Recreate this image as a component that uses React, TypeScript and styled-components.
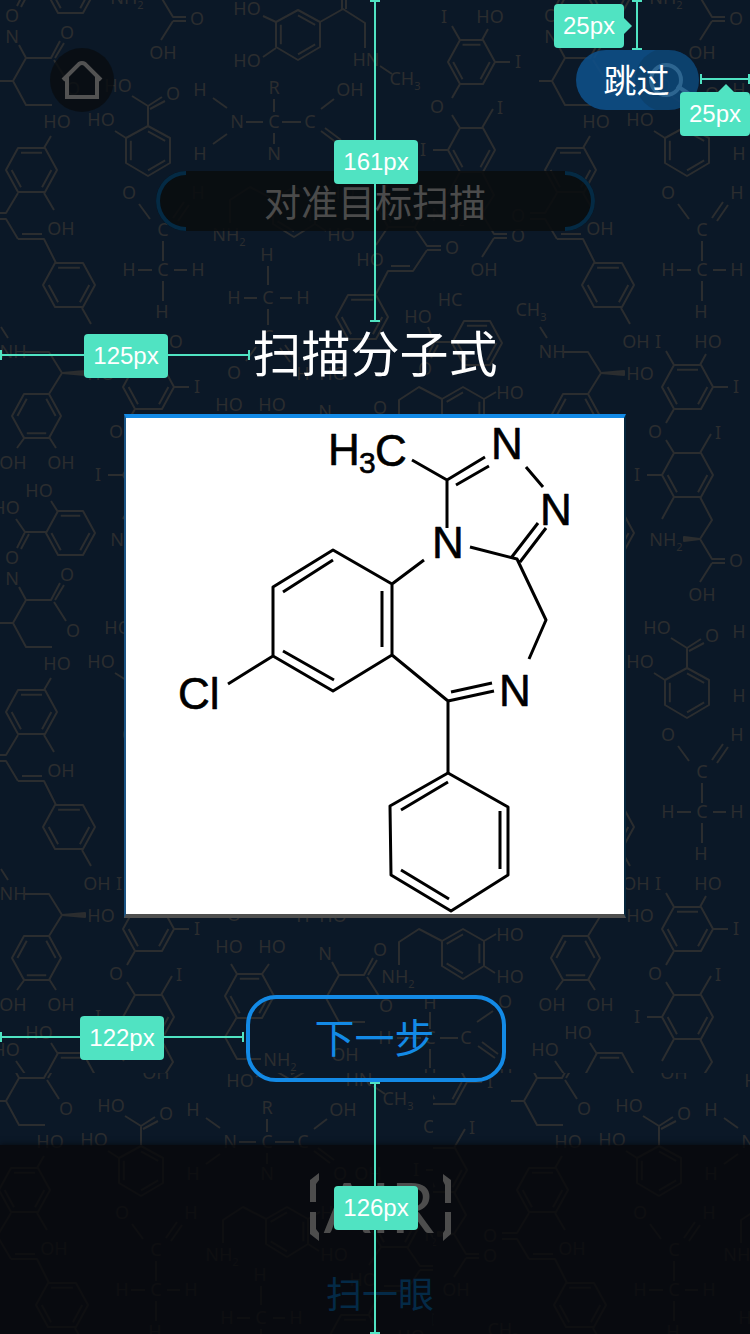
import React from 'react';
import styled, { createGlobalStyle } from 'styled-components';

const Global = createGlobalStyle`
  *, *::before, *::after { box-sizing: border-box; }
  body { margin: 0; background: #0b1827; }
`;

const cjk = `'Noto Sans CJK SC', 'Noto Sans', sans-serif`;

/* ---------- layout ---------- */

const Page = styled.main`
  position: relative;
  display: flex;
  flex-direction: column;
  align-items: center;
  min-height: 100vh;
  overflow: hidden;
  background: #0b1827;
  font-family: ${cjk};
  font-weight: 400;
`;

const Backdrop = styled.svg`
  position: absolute;
  inset: 0;
  width: 100%;
  height: 100%;
`;

const Header = styled.header`
  position: relative;
  align-self: stretch;
  display: flex;
  justify-content: space-between;
  align-items: center;
  padding: 48px 51px 0 50px;
`;

const HomeButton = styled.button`
  width: 64px;
  height: 64px;
  padding: 0;
  border: 0;
  border-radius: 32px;
  background: rgba(9, 12, 16, 0.8);
`;

const SkipButton = styled.button`
  position: relative;
  width: 123px;
  height: 60px;
  padding: 0 2px 2px 0;
  border: 0;
  border-radius: 30px;
  overflow: hidden;
  background: rgba(14, 80, 138, 0.88);
  color: #fff;
  font: 400 33px/58px ${cjk};
`;

const SkipLens = styled.svg`
  position: absolute;
  top: 0;
  right: 0;
`;

const SkipText = styled.span`
  position: relative;
`;

const Hint = styled.p`
  position: relative;
  display: flex;
  justify-content: center;
  width: 439px;
  height: 60px;
  margin: 59px 0 0;
  border-radius: 30px;
  background: rgba(9, 12, 15, 0.88);
  color: #4b4b4b;
  font-size: 37px;
  line-height: 60px;
`;

const HintArc = styled.span<{ $side: 'left' | 'right' }>`
  position: absolute;
  top: 0;
  ${(p) => p.$side}: 0;
  width: 30px;
  height: 60px;
  border: 4px solid #042a44;
  border-${(p) => (p.$side === 'left' ? 'right' : 'left')}: 0;
  border-radius: ${(p) => (p.$side === 'left' ? '30px 0 0 30px' : '0 30px 30px 0')};
`;

const Title = styled.h1`
  position: relative;
  margin: 90px 0 0;
  color: #fff;
  font-size: 49px;
  font-weight: 400;
  line-height: 60px;
`;

const Card = styled.section`
  position: relative;
  width: 502px;
  height: 504px;
  margin-top: 33px;
  border: solid;
  border-width: 4px 2px;
  border-color: #138ae6 #05263c #4f4f4e #1c5585;
  background: #fff;
`;

const Formula = styled.svg`
  display: block;
  width: 100%;
  height: 100%;
  fill: none;
  stroke: #000;
  stroke-width: 3;
  stroke-linejoin: round;

  text {
    fill: #000;
    stroke: #000;
    stroke-width: 0.6px;
    font: 400 44px 'Liberation Sans', Arial, sans-serif;
  }
  .sub { font-size: 30px; }
`;

const NextButton = styled.button`
  position: relative;
  width: 260px;
  height: 87px;
  margin: 77px 0 0 2px;
  padding: 0 3px 6px 0;
  border: 4px solid #138ae6;
  border-radius: 30px;
  background: transparent;
  color: #138ae6;
  font: 400 40px/72px ${cjk};
`;

const Footer = styled.footer`
  position: relative;
  align-self: stretch;
  flex: 1;
  display: flex;
  flex-direction: column;
  align-items: center;
  min-height: 189px;
  margin-top: 63px;
  padding: 26px 0 0 10px;
  background: rgba(7, 8, 10, 0.8);
  box-shadow: 0 0 6px rgba(7, 8, 11, 0.9);
`;

const Logo = styled.svg`
  overflow: visible;
`;

const ScanLabel = styled.span`
  margin-top: 25px;
  color: #042a47;
  font-size: 36px;
  line-height: 48px;
`;

/* ---------- spacing annotations laid over the screen ---------- */

const mint = '#50e3c2';

const Ruler = styled.div<{ $v?: boolean; $x: string; $y: number; $len: string }>`
  position: absolute;
  left: ${(p) => p.$x};
  top: ${(p) => p.$y}px;
  width: ${(p) => (p.$v ? '10px' : p.$len)};
  height: ${(p) => (p.$v ? p.$len : '10px')};
  border: solid ${mint};
  border-width: ${(p) => (p.$v ? '2px 0' : '0 2px')};
  background: linear-gradient(${mint}, ${mint}) center / ${(p) => (p.$v ? '2px 100%' : '100% 2px')} no-repeat;
`;

const Tag = styled.span<{ $x: string; $y: number; $w: number; $tip?: 'right' | 'top' }>`
  position: absolute;
  left: ${(p) => p.$x};
  top: ${(p) => p.$y}px;
  width: ${(p) => p.$w}px;
  height: 44px;
  border-radius: 4px;
  background: ${mint};
  color: #fff;
  font: 400 24px/44px 'Liberation Sans', Arial, sans-serif;
  text-align: center;

  &::after {
    content: '';
    display: ${(p) => (p.$tip ? 'block' : 'none')};
    position: absolute;
    border: 8px solid transparent;
    ${(p) =>
      p.$tip === 'right'
        ? `left: 100%; top: 14px; border-left-color: ${mint};`
        : `bottom: 100%; left: 38px; border-bottom-color: ${mint};`}
  }
`;

/* ---------- molecule wallpaper ---------- */

type P = [number, number];

function Ring({ pts, dbl }: { pts: P[]; dbl: number[] }) {
  const cx = pts.reduce((s, p) => s + p[0], 0) / 6;
  const cy = pts.reduce((s, p) => s + p[1], 0) / 6;
  const inset = ([x, y]: P) => `${cx + (x - cx) * 0.78},${cy + (y - cy) * 0.78}`;
  const inner = dbl.map((i) => `M${inset(pts[i])}L${inset(pts[(i + 1) % 6])}`).join('');
  return <path d={`M${pts.map((p) => p.join(',')).join('L')}Z${inner}`} />;
}

/* flat-topped ring, from its left-most corner */
const flat = (x: number, y: number, w = 50, h = 22): P[] => [
  [x, y], [x + 12, y - h], [x + w - 12, y - h], [x + w, y], [x + w - 12, y + h], [x + 12, y + h],
];
/* ring with a corner at the top */
const tall = (x: number, y: number, w = 22): P[] => [
  [x, y], [x + w, y + 12], [x + w, y + 37], [x, y + 50], [x - w, y + 37], [x - w, y + 12],
];

function Atom({ x, y, children }: { x: number; y: number; children: string }) {
  const m = children.match(/^(.*?)(\d?)$/)!;
  return (
    <text x={x} y={y + 6}>
      {m[1]}
      {m[2] && <tspan dy="5" fontSize="11">{m[2]}</tspan>}
    </text>
  );
}

const atoms: [string, number, number][] = [
  ['O', 12, 558], ['HO', 57, 122], ['HO', 118, 86], ['O', 173, 94], ['HO', 101, 120],
  ['HO', 247, 9], ['HO', 247, 61], ['H', 200, 90], ['R', 274, 88], ['OH', 350, 90],
  ['N', 237, 122], ['C', 274, 122], ['C', 310, 122], ['H', 200, 154], ['N', 274, 154],
  ['O', 347, 154], ['OH', 375, 154], ['HN', 366, 60], ['CH3', 405, 79],
  ['O', 129, 193], ['H', 198, 193], ['C', 163, 230], ['H', 129, 270], ['C', 163, 270],
  ['H', 198, 270], ['H', 162, 312], ['OH', 61, 229], ['H', 267, 255], ['H', 234, 298],
  ['C', 268, 298], ['H', 303, 298], ['C', 268, 337], ['O', 234, 373], ['H', 303, 374],
  ['HO', 333, 374], ['HO', 370, 260], ['O', 452, 248], ['HO', 418, 317], ['HC', 450, 300],
  ['CH3', 531, 310], ['O', 425, 369], ['NH', 13, 352], ['HO', 101, 374], ['OH', 97, 342],
  ['O', 518, 216], ['HO', 229, 405], ['HO', 272, 405], ['NH2', 280, 518], ['OH', 13, 463],
  ['OH', 61, 463], ['HO', 39, 491], ['HO', 6, 508], ['H', 430, 461], ['C', 430, 496],
  ['H', 385, 496], ['C', 466, 496], ['O', 505, 460], ['OH', 345, 513], ['H', 430, 534], ['H', 506, 534],
];

const bonds = [
  // salicylic acid
  'M51 136L44 148M132 96L148 106L162 97M150 109L165 101M148 106V126M115 131L126 138',
  // chalcone chain
  'M44 193L54 210M18 193L6 213H-9M18 239L6 219H-9M18 239H44L56 263M22 234H42M82 308L91 324',
  // amino acid
  'M213 98L227 108M213 144L227 134M246 122H263M282 122H301M274 99V112M274 133V144M321 109L334 99M321 131L337 143M325 128L341 140',
  // adrenaline
  'M263 16L276 22M263 57L276 48M320 22L343 9L365 23V48M342 9V-8M346 9V-8M380 66L392 74',
  // aldehyde
  'M139 204L150 219M173 218L184 202M178 221L189 205M163 241V261M138 270H152M174 270H187M163 281V301',
  'M268 266V285M244 298H257M280 298H292M268 309V325M256 347L246 361M280 348L290 362M285 345L295 359',
  // second chain
  'M376 245L388 227M414 227L427 246H441M427 250H441M427 250L413 271H388L376 294M391 266H410',
  'M428 327L434 342H452M434 343L427 357M438 345L431 358',
  // amine with wedge
  'M1 327L8 338M25 352H49L62 373L49 394M25 437L17 448M49 437L56 448',
  'M231 422L237 432M269 422L262 432M237 475L225 495L237 517H261',
  // benzoic acid
  'M51 501L58 512M46 532H25L16 519M25 532L17 548M29 534L21 549',
  'M430 470V487M397 496H421M440 496H458M477 480L493 469M478 504L495 516M482 500L498 512M430 507V526',
].join('');

function Peptide() {
  return (
    <g>
      <Atom x={12} y={37}>N</Atom>
      <Atom x={67} y={33}>O</Atom>
      <Atom x={73} y={89}>O</Atom>
      <path d="M19 45L26 58H51L60 41M55 58L64 43M54 60L66 79M26 58L13 81H0M13 81L26 105H52" />
    </g>
  );
}

function Dopamine() {
  return (
    <g>
      <Atom x={229} y={235}>NH2</Atom>
      <Atom x={341} y={193}>HO</Atom>
      <Atom x={341} y={235}>HO</Atom>
      <Ring pts={tall(294, 187, 21)} dbl={[1, 3, 5]} />
      <path d="M230 223V200L250 187L273 199M315 199L327 192M315 224L326 231" />
    </g>
  );
}

function Thyroxine({ n = 0 }: { n?: number }) {
  return (
    <g>
      <Atom x={119 + n} y={342}>I</Atom>
      <Atom x={169} y={342}>HO</Atom>
      <Atom x={197} y={387}>I</Atom>
      <Atom x={116} y={432}>O</Atom>
      <Atom x={179} y={433}>I</Atom>
      <Atom x={98 + n} y={475}>I</Atom>
      <Atom x={127} y={540}>NH2</Atom>
      <Atom x={197} y={561}>O</Atom>
      <Atom x={163} y={595}>OH</Atom>
      <Ring pts={flat(123 + n, 387, 51 - n)} dbl={[1, 3, 5]} />
      <Ring pts={flat(123 + n, 475, 51 - n)} dbl={[3, 5]} />
      <path d={`M${127 + n} 351L${135 + n} 365M167 354L161 365M174 387H189M${135 + n} 409L${127 + n} 423M${127 + n} 440L${135 + n} 453M172 434L161 453M${108 + n} 475H${123 + n}M${135 + n} 497L${123 + n} 519M161 497L173 520L161 539L173 559H186M173 563H186M173 563L161 582`} />
      <path d="M161 539L145 537V541Z" fill="#2b2d2f" />
    </g>
  );
}

function Tile() {
  return (
    <g>
      {atoms.map(([t, x, y]) => (
        <Atom key={`${t}${x}-${y}`} x={x} y={y}>{t}</Atom>
      ))}
      <path d={bonds} />
      <path d="M62 373L85 371V375Z" fill="#2b2d2f" />
      <Ring pts={flat(6, 170, 51)} dbl={[1, 3, 5]} />
      <Ring pts={flat(43, 285, 52)} dbl={[1, 3, 5]} />
      <Ring pts={tall(148, 126)} dbl={[0, 2, 4]} />
      <Ring pts={tall(298, 10)} dbl={[0, 2, 4]} />
      <Ring pts={flat(336, 317, 52)} dbl={[1, 3, 5]} />
      <Ring pts={flat(376, 205, 51)} dbl={[1, 3, 5]} />
      <Ring pts={flat(452, 343, 50)} dbl={[1, 3, 5]} />
      <Ring pts={flat(12, 416, 49)} dbl={[0, 2, 4]} />
      <Ring pts={flat(225, 454, 49)} dbl={[1, 3, 5]} />
      <Ring pts={flat(46, 533, 49)} dbl={[1, 3, 5]} />
      <Peptide />
      <g transform="translate(313 375)"><Peptide /></g>
      <Dopamine />
      <g transform="translate(169 200)"><Dopamine /></g>
      <Thyroxine />
      <g transform="translate(321 -325)"><Thyroxine n={4} /></g>
    </g>
  );
}

function Wallpaper() {
  return (
    <Backdrop viewBox="0 0 750 1334" preserveAspectRatio="xMidYMin slice" aria-hidden="true">
      <defs>
        <g id="tile"><Tile /></g>
        <g id="column">
          <use href="#tile" y="-542" />
          <use href="#tile" />
          <use href="#tile" y="542" />
        </g>
        <clipPath id="upper"><rect width="750" height="1073" /></clipPath>
        <clipPath id="lowerLeft"><rect y="1073" width="433" height="261" /></clipPath>
        <clipPath id="lowerRight"><rect x="433" y="1073" width="317" height="261" /></clipPath>
      </defs>
      <g
        fill="none"
        stroke="#2b2d2f"
        strokeWidth="2"
        strokeLinejoin="round"
        fontFamily="'Noto Sans', sans-serif"
        fontSize="18"
        fontWeight="400"
        textAnchor="middle"
      >
        <style>{`#tile text { fill: #2b2d2f; stroke: none; }`}</style>
        <g clipPath="url(#upper)">
          <use href="#column" />
          <use href="#column" x="539" />
        </g>
        <g clipPath="url(#lowerLeft)">
          <use href="#column" x="-7" y="1020" />
        </g>
        <g clipPath="url(#lowerRight)">
          <use href="#column" x="-28" y="1020" />
          <use href="#column" x="511" y="1020" />
        </g>
      </g>
    </Backdrop>
  );
}

/* ---------- screen ---------- */

export default function App() {
  return (
    <Page>
      <Global />
      <Wallpaper />

      <Header>
        <HomeButton aria-label="首页">
          <svg width="64" height="64" viewBox="0 0 64 64" fill="none" stroke="#525252" strokeWidth="4">
            <path d="M13 32L29 16Q32 14 35 16L51 32" strokeWidth="4" />
            <path d="M17 29V49H47V29" />
          </svg>
        </HomeButton>
        <SkipButton>
          <SkipLens width="64" height="60" viewBox="0 0 64 60" fill="none" aria-hidden="true">
            <circle cx="32" cy="30" r="32" fill="#0c1620" fillOpacity="0.16" />
            <circle cx="31" cy="30" r="15" stroke="#2d6590" strokeWidth="4" />
            <path d="M42 36L64 50" stroke="#2d6590" strokeWidth="4" />
          </SkipLens>
          <SkipText>跳过</SkipText>
        </SkipButton>
      </Header>

      <Hint>
        <HintArc $side="left" />
        对准目标扫描
        <HintArc $side="right" />
      </Hint>

      <Title>扫描分子式</Title>

      <Card>
        <Formula viewBox="126 418 498 496" role="img" aria-label="分子式">
          <text x="328" y="465">H</text>
          <text x="359" y="473" className="sub">3</text>
          <text x="375" y="466">C</text>
          <text x="491" y="459">N</text>
          <text x="540" y="525">N</text>
          <text x="432" y="558">N</text>
          <text x="499" y="706">N</text>
          <text x="178" y="709">Cl</text>
          <path d="M412 460L447 480V528M447 480L485 457M456 485L489 466M526 467L543 487M470 547L517 559L546 620L529 659M538 523L511 558M546 528L520 562" />
          <path d="M392 584L333 550L273 587V656L333 691L392 655ZM424 560L392 584M392 655L448 701V773M333 560L283 592M382 591V647M283 651L334 680M228 684L273 656M448 701L494 691M451 692L492 683" />
          <path d="M448 773L508 807V875L451 911L391 875L390 806ZM448 782L401 810M500 811V869M449 899L401 870" />
        </Formula>
      </Card>

      <NextButton>下一步</NextButton>

      <Footer>
        <Logo width="144" height="72" viewBox="0 0 144 72" fill="#4d4d4d" role="img" aria-label="AIR">
          <path d="M2 9L11 2V9L8 13V31H2ZM2 41H8V58L11 62V70L2 63Z" />
          <path d="M143 9L135 3V10L137 14V32H143ZM143 41H137V59L135 62V70L143 63Z" />
          <text x="71" y="62" textAnchor="middle" fontFamily="Lato, sans-serif" fontSize="70" fontWeight="400">AIR</text>
        </Logo>
        <ScanLabel>扫一眼</ScanLabel>
      </Footer>

      <Ruler $v $x="calc(50% - 5px)" $y={0} $len="322px" />
      <Tag $x="calc(50% - 41px)" $y={140} $w={84}>161px</Tag>
      <Ruler $x="0px" $y={350} $len="calc(50% - 125px)" />
      <Tag $x="84px" $y={334} $w={84}>125px</Tag>
      <Ruler $x="0px" $y={1032} $len="calc(50% - 131px)" />
      <Tag $x="80px" $y={1016} $w={84}>122px</Tag>
      <Ruler $v $x="calc(50% - 5px)" $y={1082} $len="252px" />
      <Tag $x="calc(50% - 41px)" $y={1186} $w={84}>126px</Tag>
      <Ruler $v $x="calc(100% - 118px)" $y={0} $len="50px" />
      <Tag $x="calc(100% - 196px)" $y={4} $w={70} $tip="right">25px</Tag>
      <Ruler $x="calc(100% - 50px)" $y={74} $len="50px" />
      <Tag $x="calc(100% - 70px)" $y={92} $w={70} $tip="top">25px</Tag>
    </Page>
  );
}
